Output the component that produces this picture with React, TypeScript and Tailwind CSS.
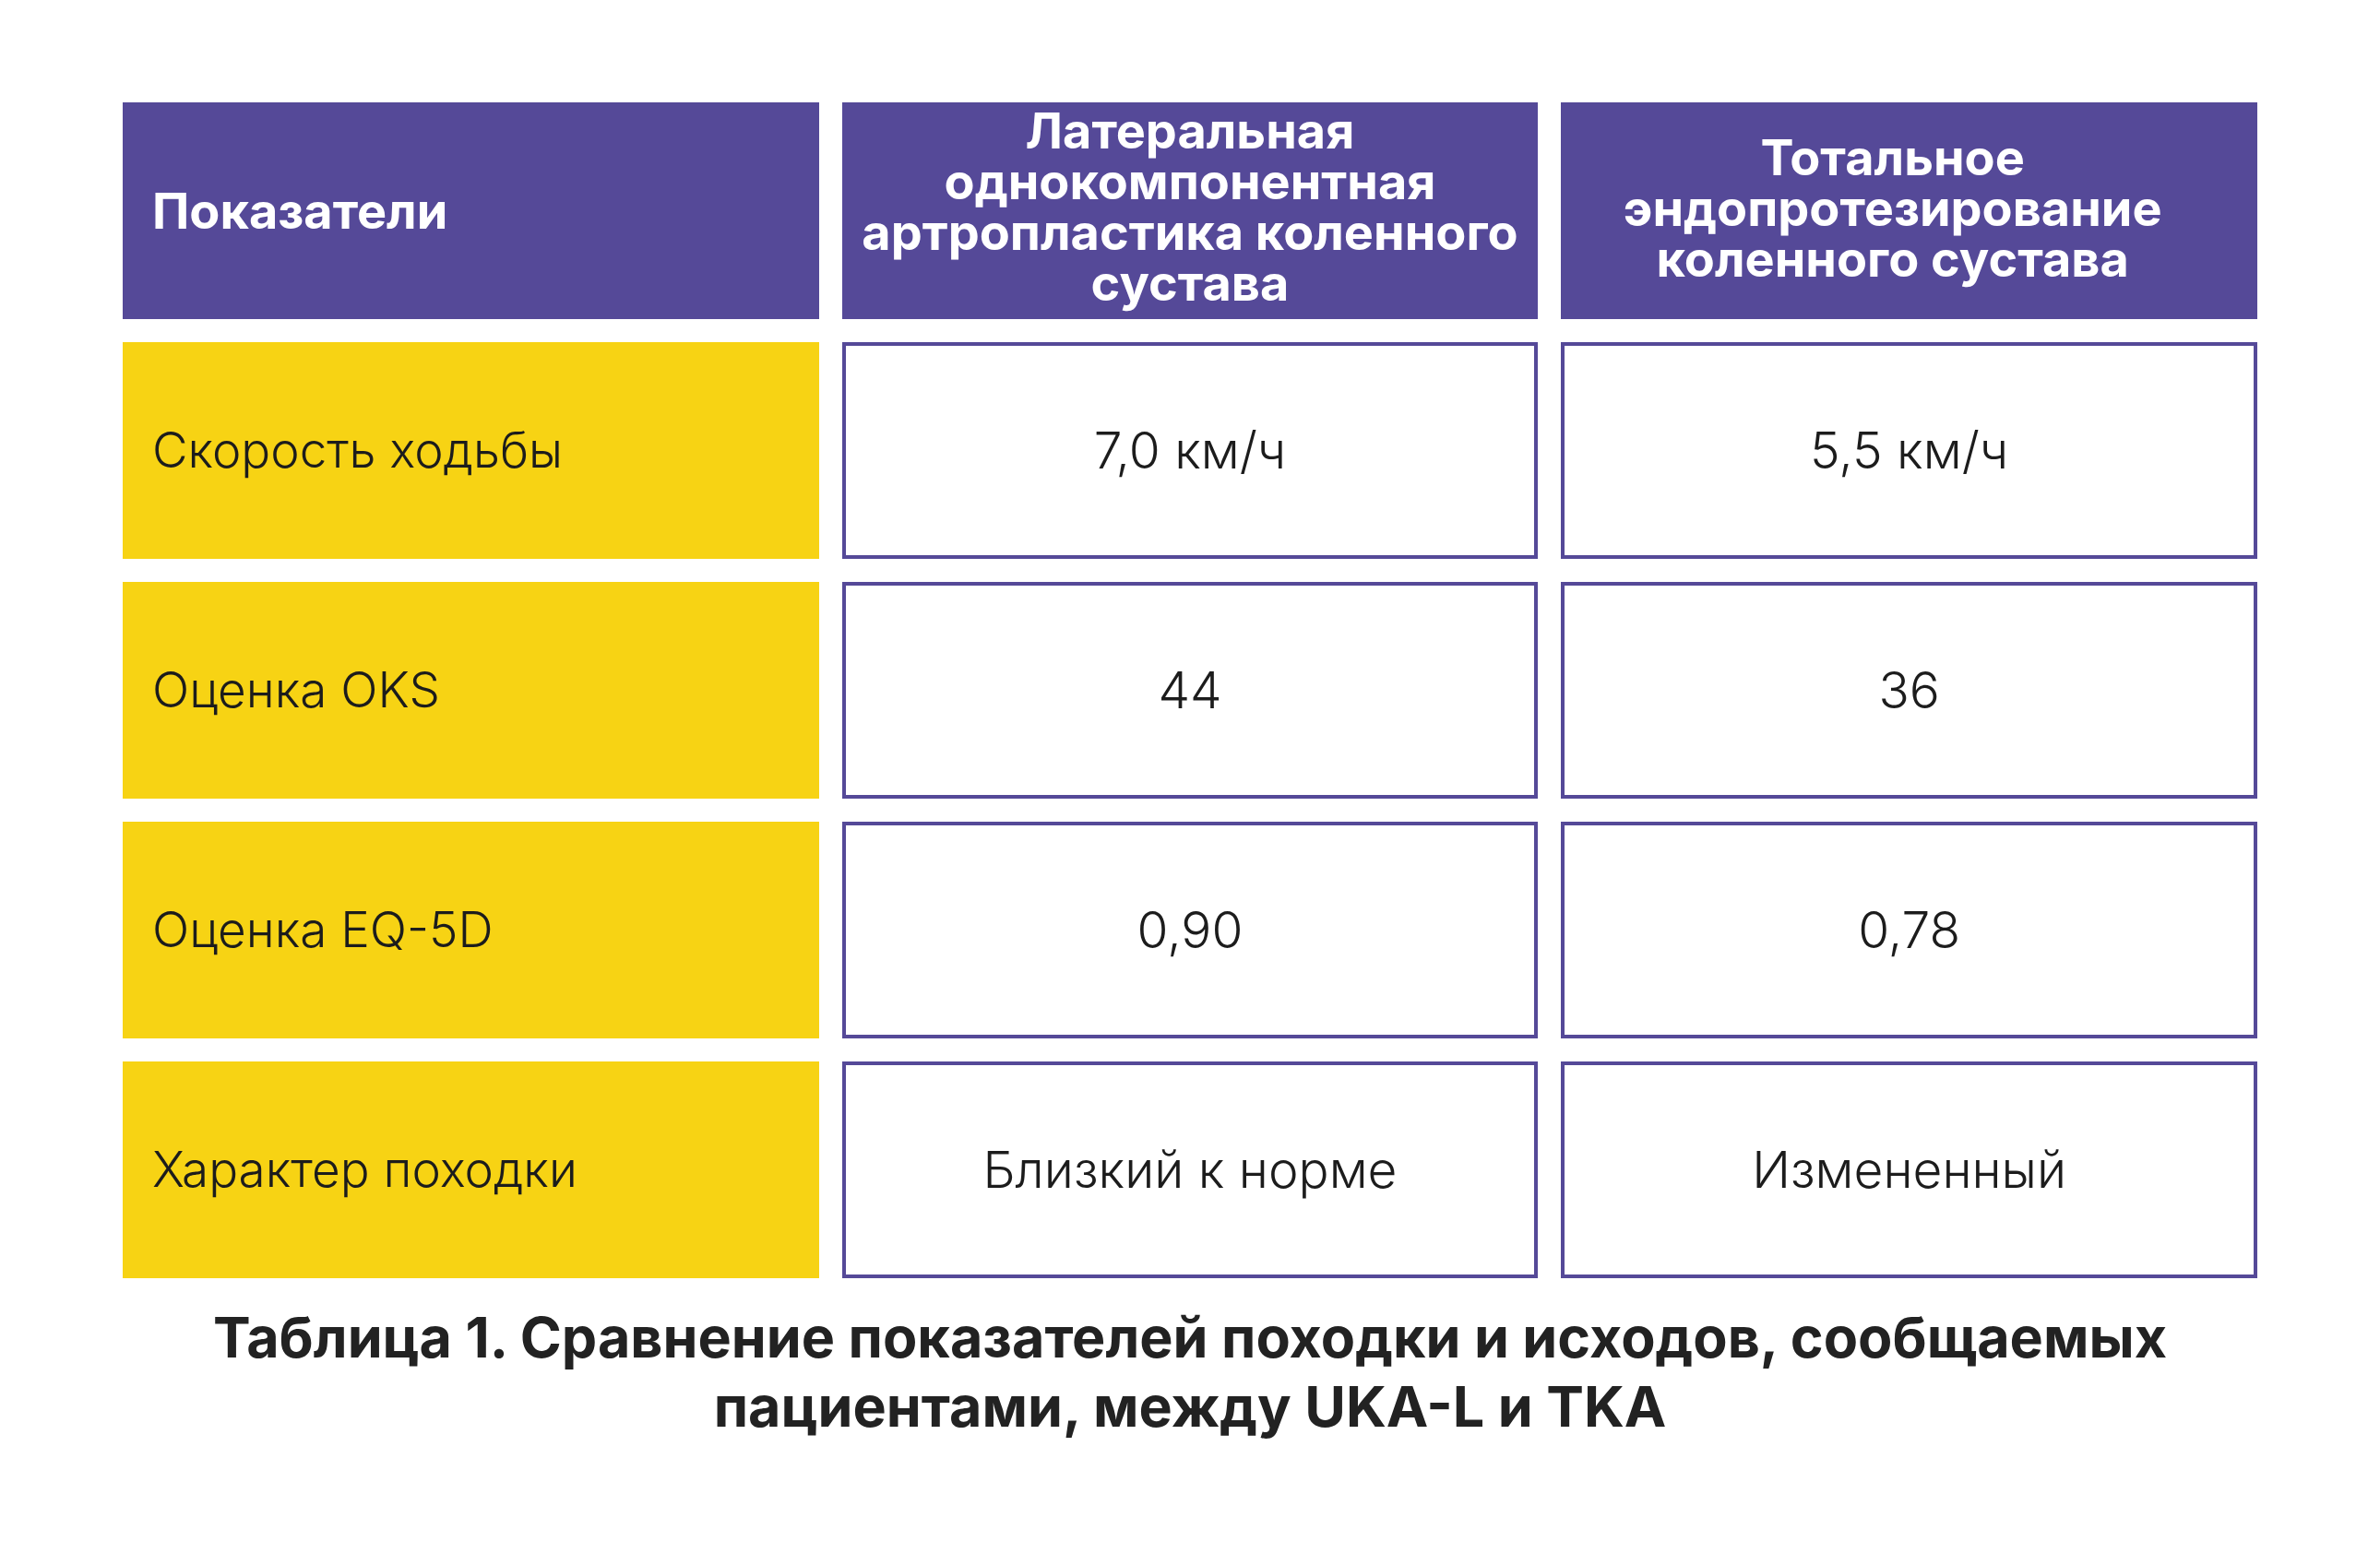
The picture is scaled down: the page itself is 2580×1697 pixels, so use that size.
import React from "react";

const font = { fontFamily: "Inter, 'Noto Sans', sans-serif" };

function HeadCell({ children, variant }: { children: React.ReactNode; variant: "left" | "mid" | "right" }) {
  const cls =
    variant === "left"
      ? "justify-start pl-[32px]"
      : variant === "mid"
      ? "justify-center text-center pb-[9px]"
      : "justify-center text-center pb-[7px] pr-[36px]";
  return (
    <div
      className={
        "h-[235px] bg-[#554998] text-white font-bold text-[54px] leading-[55px] flex items-center " + cls
      }
    >
      <div>{children}</div>
    </div>
  );
}

function LabelCell({ children }: { children: React.ReactNode }) {
  return (
    <div className="h-[235px] bg-[#f7d314] text-[#1c1c1c] font-light text-[53px] flex items-center pl-[32px]">
      {children}
    </div>
  );
}

function ValueCell({ children }: { children: React.ReactNode }) {
  return (
    <div className="h-[235px] bg-white border-[4px] border-[#554998] text-[#1c1c1c] font-light text-[55px] flex items-center justify-center">
      {children}
    </div>
  );
}

const rows: [string, string, string][] = [
  ["Скорость ходьбы", "7,0 км/ч", "5,5 км/ч"],
  ["Оценка OKS", "44", "36"],
  ["Оценка EQ-5D", "0,90", "0,78"],
  ["Характер походки", "Близкий к норме", "Измененный"],
];

export default function App() {
  return (
    <div className="w-[2580px] h-[1697px] bg-white pt-[111px] px-[133px]" style={font}>
      <div className="grid grid-cols-3 gap-x-[25px] gap-y-[25px]">
        <HeadCell variant="left">Показатели</HeadCell>
        <HeadCell variant="mid">
          Латеральная
          <br />
          однокомпонентная
          <br />
          артропластика коленного
          <br />
          сустава
        </HeadCell>
        <HeadCell variant="right">
          Тотальное
          <br />
          эндопротезирование
          <br />
          коленного сустава
        </HeadCell>
        {rows.map((r) => (
          <React.Fragment key={r[0]}>
            <LabelCell>{r[0]}</LabelCell>
            <ValueCell>{r[1]}</ValueCell>
            <ValueCell>{r[2]}</ValueCell>
          </React.Fragment>
        ))}
      </div>
      <div className="mt-[27px] text-center text-[#222222] font-bold text-[61px] leading-[75px]">
        Таблица 1. Сравнение показателей походки и исходов, сообщаемых
        <br />
        пациентами, между UKA-L и TKA
      </div>
    </div>
  );
}
